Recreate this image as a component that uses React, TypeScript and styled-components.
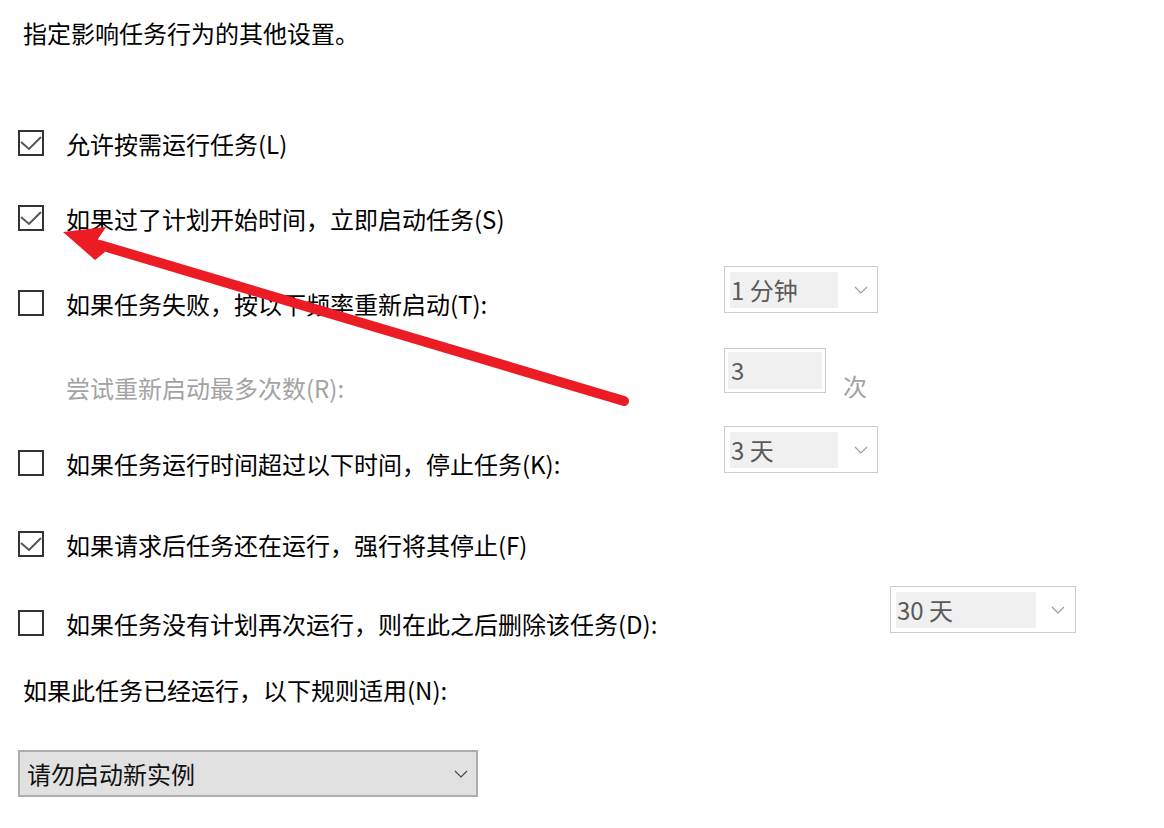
import React from "react";
import styled, { createGlobalStyle } from "styled-components";

const GlobalStyle = createGlobalStyle`
  html, body { margin: 0; padding: 0; background: #fff; }
  body {
    font-family: "Noto Sans CJK SC", "Noto Sans", sans-serif;
    font-size: 24px;
    color: #000;
  }
`;

const Page = styled.div`
  position: relative;
  width: 1164px;
  height: 828px;
  overflow: hidden;
  background: #fff;
  box-sizing: border-box;
  padding: 17px 0 0 18px;
  display: flex;
  flex-direction: column;
  align-items: flex-start;
`;

const Heading = styled.div<{ $mt?: number }>`
  margin-top: ${(p) => p.$mt ?? 0}px;
  padding-left: 5px;
  height: 32px;
  line-height: 32px;
  white-space: nowrap;
`;

const OptionRow = styled.div<{ $mt: number }>`
  display: flex;
  align-items: flex-start;
  margin-top: ${(p) => p.$mt}px;
`;

const CheckLine = styled.div<{ $mt?: number; $disabled?: boolean }>`
  display: flex;
  align-items: center;
  gap: 22px;
  width: 706px;
  flex: none;
  height: 32px;
  margin-top: ${(p) => p.$mt ?? 0}px;
  color: ${(p) => (p.$disabled ? "#a3a3a3" : "#000")};
  white-space: nowrap;
`;

const Box = styled.span`
  width: 26px;
  height: 26px;
  box-sizing: border-box;
  border: 2px solid #333;
  flex: none;
  display: flex;
  align-items: center;
  justify-content: center;
  margin-top: -2px;
`;

const Indent = styled.span`
  width: 26px;
  flex: none;
`;

const Label = styled.span`
  line-height: 32px;
`;

const Combo = styled.div<{ $ml?: number; $w: number }>`
  margin-left: ${(p) => p.$ml ?? 0}px;
  width: ${(p) => p.$w}px;
  height: 47px;
  box-sizing: border-box;
  border: 1px solid #cccccc;
  padding: 5px;
  display: flex;
  align-items: flex-start;
  flex: none;
`;

const ComboValue = styled.div<{ $w: number }>`
  width: ${(p) => p.$w}px;
  height: 36px;
  background: #f0f0f0;
  color: #5a5a5a;
  line-height: 35px;
  padding-left: 1px;
  box-sizing: border-box;
  white-space: nowrap;
`;

const ChevronWrap = styled.span<{ $mr: number }>`
  margin-left: auto;
  margin-right: ${(p) => p.$mr}px;
  height: 36px;
  display: flex;
  align-items: center;
`;

const SpinGroup = styled.div`
  display: flex;
  align-items: flex-start;
  flex: none;
`;

const TextBox = styled.div`
  width: 102px;
  height: 45px;
  box-sizing: border-box;
  border: 1px solid #cccccc;
  padding: 3px;
`;

const TextValue = styled.div`
  height: 37px;
  background: #f0f0f0;
  color: #5a5a5a;
  line-height: 36px;
  padding-left: 3px;
`;

const Unit = styled.span`
  margin-left: 17px;
  margin-top: 22px;
  height: 32px;
  line-height: 32px;
  color: #a3a3a3;
`;

const Select = styled.div<{ $mt: number }>`
  margin-top: ${(p) => p.$mt}px;
  width: 460px;
  height: 47px;
  box-sizing: border-box;
  border: 2px solid #adadad;
  background: #e1e1e1;
  display: flex;
  align-items: center;
  padding: 0 8px 0 7px;
  color: #111;
`;

const SelectText = styled.span`
  line-height: 32px;
  white-space: nowrap;
`;

const SelectChevron = styled.span`
  margin-left: auto;
  display: flex;
  align-items: center;
`;

const Overlay = styled.svg`
  position: absolute;
  left: 0;
  top: 0;
  pointer-events: none;
`;

const Check = () => (
  <svg width="22" height="22" viewBox="0 0 22 22">
    <polyline
      points="1,10 9,17 21,5"
      fill="none"
      stroke="#555"
      strokeWidth="2"
    />
  </svg>
);

const Chevron = ({ color = "#9a9a9a" }: { color?: string }) => (
  <svg width="14" height="8" viewBox="0 0 14 8">
    <polyline points="1,1 7,7 13,1" fill="none" stroke={color} strokeWidth="1.1" />
  </svg>
);

const CheckBox = ({ checked }: { checked?: boolean }) => (
  <Box>{checked ? <Check /> : null}</Box>
);

export default function App() {
  return (
    <>
      <GlobalStyle />
      <Page>
        <Heading>指定影响任务行为的其他设置。</Heading>

        <OptionRow $mt={79}>
          <CheckLine>
            <CheckBox checked />
            <Label>允许按需运行任务(L)</Label>
          </CheckLine>
        </OptionRow>

        <OptionRow $mt={43}>
          <CheckLine>
            <CheckBox checked />
            <Label>如果过了计划开始时间，立即启动任务(S)</Label>
          </CheckLine>
        </OptionRow>

        <OptionRow $mt={31}>
          <CheckLine $mt={22}>
            <CheckBox />
            <Label>如果任务失败，按以下频率重新启动(T):</Label>
          </CheckLine>
          <Combo $w={154}>
            <ComboValue $w={108}>1 分钟</ComboValue>
            <ChevronWrap $mr={4}>
              <Chevron />
            </ChevronWrap>
          </Combo>
        </OptionRow>

        <OptionRow $mt={28}>
          <CheckLine $mt={24} $disabled>
            <Indent />
            <Label>尝试重新启动最多次数(R):</Label>
          </CheckLine>
          <SpinGroup>
            <TextBox>
              <TextValue>3</TextValue>
            </TextBox>
            <Unit>次</Unit>
          </SpinGroup>
        </OptionRow>

        <OptionRow $mt={22}>
          <CheckLine $mt={22}>
            <CheckBox />
            <Label>如果任务运行时间超过以下时间，停止任务(K):</Label>
          </CheckLine>
          <Combo $w={154}>
            <ComboValue $w={108}>3 天</ComboValue>
            <ChevronWrap $mr={4}>
              <Chevron />
            </ChevronWrap>
          </Combo>
        </OptionRow>

        <OptionRow $mt={49}>
          <CheckLine>
            <CheckBox checked />
            <Label>如果请求后任务还在运行，强行将其停止(F)</Label>
          </CheckLine>
        </OptionRow>

        <OptionRow $mt={25}>
          <CheckLine $mt={22}>
            <CheckBox />
            <Label>如果任务没有计划再次运行，则在此之后删除该任务(D):</Label>
          </CheckLine>
          <Combo $w={186} $ml={166}>
            <ComboValue $w={140}>30 天</ComboValue>
            <ChevronWrap $mr={5}>
              <Chevron />
            </ChevronWrap>
          </Combo>
        </OptionRow>

        <Heading $mt={34}>如果此任务已经运行，以下规则适用(N):</Heading>

        <Select $mt={44}>
          <SelectText>请勿启动新实例</SelectText>
          <SelectChevron>
            <Chevron color="#444" />
          </SelectChevron>
        </Select>

        <Overlay width="1164" height="828" viewBox="0 0 1164 828">
          <line
            x1="100"
            y1="245"
            x2="624"
            y2="401"
            stroke="#ec1c24"
            strokeWidth="10"
            strokeLinecap="round"
          />
          <polygon points="63,232 106,227 98,239 105,252 95,260" fill="#ec1c24" />
        </Overlay>
      </Page>
    </>
  );
}
